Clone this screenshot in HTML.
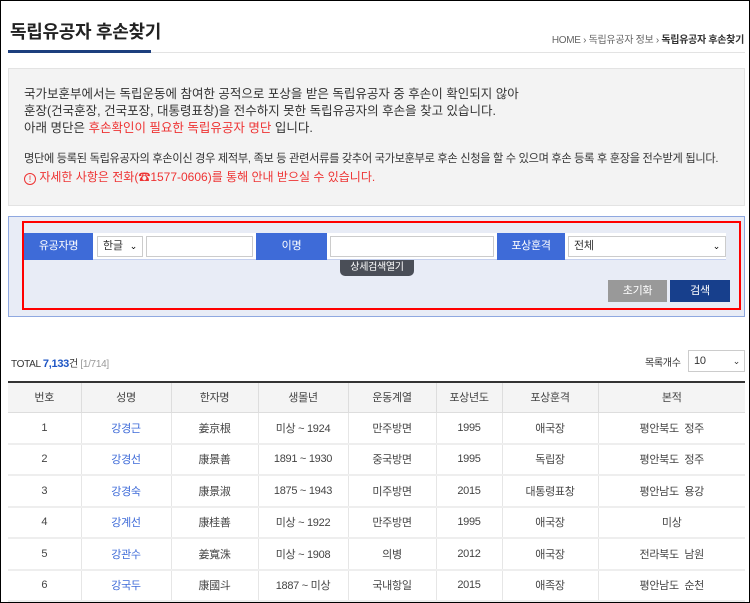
<!DOCTYPE html>
<html><head><meta charset="utf-8"><style>
*{box-sizing:border-box;margin:0;padding:0}
body{width:750px;height:603px;overflow:hidden;background:#fff;font-family:"Liberation Sans","Noto Sans CJK KR",sans-serif;color:#333;position:relative;letter-spacing:-0.3px}
.frame{position:absolute;left:0;top:0;width:750px;height:603px;border:1px solid #000;pointer-events:none}
.abs{position:absolute}
.t{font-size:11.5px;white-space:nowrap}
.lbl{position:absolute;top:233px;height:27px;background:#3e6bd8;color:#fff;font-size:11px;text-align:center;line-height:27px}
.inp{position:absolute;background:#fff;border:1px solid #ccc;height:21px;top:236px;font-size:11px;line-height:19px;padding-left:5px}
.arr{position:absolute;right:5px;top:0;font-size:9px;color:#000}
table{position:absolute;left:8px;top:381px;width:737px;border-collapse:collapse;border-top:2px solid #333;font-size:11px;color:#444}
th{background:#f4f4f4;height:30px;font-weight:normal;border-right:1px solid #ddd;border-bottom:1px solid #ddd}
td{height:31.5px;text-align:center;border-right:1px solid #e6e6e6;border-bottom:2px solid #eee}
th:last-child,td:last-child{border-right:none}
td.n{color:#3e6bd8}
</style></head><body>
<div class="abs" style="left:10px;top:18px;font-size:18px;font-weight:bold;color:#222">독립유공자 후손찾기</div>
<div class="abs t" style="right:6px;top:31px;font-size:10px;color:#666">HOME › 독립유공자 정보 › <b style="color:#333">독립유공자 후손찾기</b></div>
<div class="abs" style="left:8px;top:52px;width:737px;height:1px;background:#e3e3e3"></div>
<div class="abs" style="left:8px;top:50px;width:143px;height:3px;background:#1d3f7e"></div>
<div class="abs" style="left:8px;top:68px;width:737px;height:138px;background:#f3f3f3;border:1px solid #e3e3e3"></div>
<div class="abs t" style="left:24px;top:86px;line-height:17px;color:#333;font-size:12.5px;letter-spacing:0">국가보훈부에서는 독립운동에 참여한 공적으로 포상을 받은 독립유공자 중 후손이 확인되지 않아<br>훈장(건국훈장, 건국포장, 대통령표창)을 전수하지 못한 독립유공자의 후손을 찾고 있습니다.<br>아래 명단은 <span style="color:#e33">후손확인이 필요한 독립유공자 명단</span> 입니다.</div>
<div class="abs t" style="left:24px;top:150px;line-height:18px;font-size:11.5px;letter-spacing:-0.3px"><span style="font-size:11.2px">명단에 등록된 독립유공자의 후손이신 경우 제적부, 족보 등 관련서류를 갖추어 국가보훈부로 후손 신청을 할 수 있으며 후손 등록 후 훈장을 전수받게 됩니다.</span><br><span style="color:#e33;font-size:12px;letter-spacing:0"><span style="display:inline-block;width:12px;height:12px;border:1px solid #e33;border-radius:50%;font-size:9px;text-align:center;line-height:10px;vertical-align:-1px">!</span> 자세한 사항은 전화(☎1577-0606)를 통해 안내 받으실 수 있습니다.</span></div>
<div class="abs" style="left:8px;top:216px;width:737px;height:101px;background:#e8ecf6;border:1px solid #8fa8e0"></div>
<div class="abs" style="left:24px;top:233px;width:702px;height:27px;background:#fff;border-bottom:1px solid #c5d0ee"></div>
<div class="lbl" style="left:24px;width:69px">유공자명</div>
<div class="inp" style="left:97px;width:46px">한글<span class="arr">⌄</span></div>
<div class="inp" style="left:146px;width:107px"></div>
<div class="lbl" style="left:256px;width:71px">이명</div>
<div class="inp" style="left:330px;width:164px"></div>
<div class="lbl" style="left:497px;width:68px">포상훈격</div>
<div class="inp" style="left:568px;width:158px">전체<span class="arr">⌄</span></div>
<div class="abs" style="left:340px;top:260px;width:74px;height:16px;background:#4a4e57;color:#fff;font-size:10px;text-align:center;line-height:15px;border-radius:0 0 5px 5px">상세검색열기</div>
<div class="abs" style="left:608px;top:280px;width:59px;height:22px;background:#999;color:#fff;font-size:11px;text-align:center;line-height:22px">초기화</div>
<div class="abs" style="left:670px;top:280px;width:60px;height:22px;background:#173f8c;color:#fff;font-size:11px;text-align:center;line-height:22px">검색</div>
<div class="abs" style="left:22px;top:221px;width:719px;height:89px;border:2px solid #f00"></div>
<div class="abs t" style="left:11px;top:355px;font-size:10px;color:#333">TOTAL <b style="color:#1d55c4;font-size:11px">7,133</b>건 <span style="color:#999">[1/714]</span></div>
<div class="abs t" style="left:645px;top:354px;font-size:10px">목록개수</div>
<div class="abs" style="left:688px;top:350px;width:57px;height:22px;border:1px solid #ccc;font-size:11px;line-height:20px;padding-left:5px">10<span style="position:absolute;right:4px;font-size:9px">⌄</span></div>
<table>
<tr><th style="width:73px">번호</th><th style="width:90px">성명</th><th style="width:87px">한자명</th><th style="width:90px">생몰년</th><th style="width:88px">운동계열</th><th style="width:66px">포상년도</th><th style="width:96px">포상훈격</th><th>본적</th></tr>
<tr><td>1</td><td class="n">강경근</td><td>姜京根</td><td>미상 ~ 1924</td><td>만주방면</td><td>1995</td><td>애국장</td><td>평안북도 &nbsp;정주</td></tr>
<tr><td>2</td><td class="n">강경선</td><td>康景善</td><td>1891 ~ 1930</td><td>중국방면</td><td>1995</td><td>독립장</td><td>평안북도 &nbsp;정주</td></tr>
<tr><td>3</td><td class="n">강경숙</td><td>康景淑</td><td>1875 ~ 1943</td><td>미주방면</td><td>2015</td><td>대통령표창</td><td>평안남도 &nbsp;용강</td></tr>
<tr><td>4</td><td class="n">강계선</td><td>康桂善</td><td>미상 ~ 1922</td><td>만주방면</td><td>1995</td><td>애국장</td><td>미상</td></tr>
<tr><td>5</td><td class="n">강관수</td><td>姜寬洙</td><td>미상 ~ 1908</td><td>의병</td><td>2012</td><td>애국장</td><td>전라북도 &nbsp;남원</td></tr>
<tr><td>6</td><td class="n">강국두</td><td>康國斗</td><td>1887 ~ 미상</td><td>국내항일</td><td>2015</td><td>애족장</td><td>평안남도 &nbsp;순천</td></tr>
</table>
<div class="frame"></div>
</body></html>
